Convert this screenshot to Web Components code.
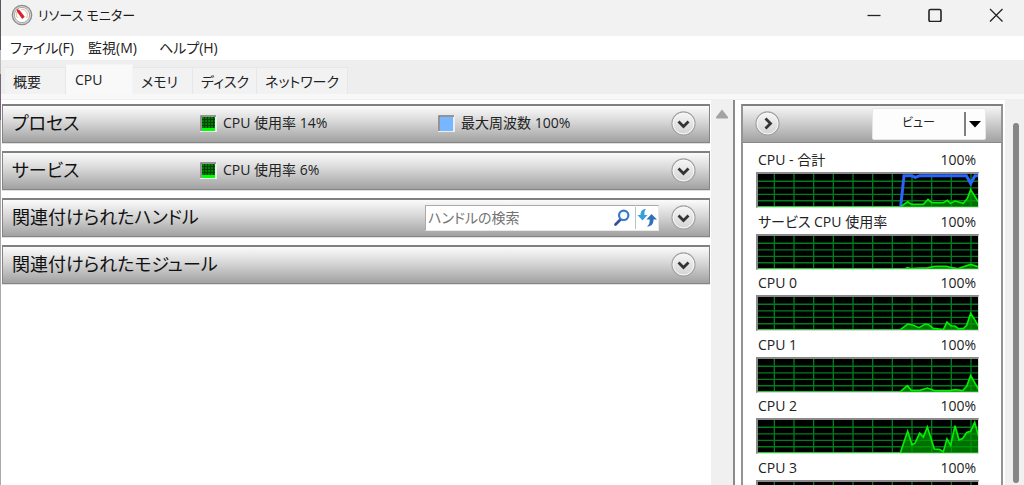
<!DOCTYPE html>
<html lang="ja">
<head>
<meta charset="utf-8">
<title>リソース モニター</title>
<style>
html, body { margin: 0; height: 100%; }
body { background: #fff; color: #1a1a1a; font: 14px/20px "Open Sans", "Noto Sans CJK JP", sans-serif; font-feature-settings: "palt"; overflow: hidden; }
</style>
</head>
<body>
<rm-window>
  <rm-titlebar slot="title">リソース モニター</rm-titlebar>
  <rm-menubar slot="menu">
    <rm-menu>ファイル(F)</rm-menu>
    <rm-menu>監視(M)</rm-menu>
    <rm-menu>ヘルプ(H)</rm-menu>
  </rm-menubar>
  <rm-tabs slot="tabs">
    <rm-tab style="--w:61px">概要</rm-tab>
    <rm-tab style="--w:67px" selected>CPU</rm-tab>
    <rm-tab style="--w:60px">メモリ</rm-tab>
    <rm-tab style="--w:64px">ディスク</rm-tab>
    <rm-tab style="--w:91px">ネットワーク</rm-tab>
  </rm-tabs>
  <rm-section slot="main" heading="プロセス">
    <rm-legend slot="first" kind="usage">CPU 使用率 14%</rm-legend>
    <rm-legend slot="second" kind="freq">最大周波数 100%</rm-legend>
  </rm-section>
  <rm-section slot="main" heading="サービス">
    <rm-legend slot="first" kind="usage">CPU 使用率 6%</rm-legend>
  </rm-section>
  <rm-section slot="main" heading="関連付けられたハンドル">
    <rm-search slot="tool"></rm-search>
  </rm-section>
  <rm-section slot="main" heading="関連付けられたモジュール"></rm-section>
  <rm-graphs slot="side">
    <rm-graph label="CPU - 合計" points="428,99 449,84 461,92 496,92 510,77 521,87 556,87 568,80 577,89 591,82 616,89 628,74 638,47 661,84" freq="428,99 438,5 461,5 472,10 485,5 625,5 638,29 651,5 661,5"></rm-graph>
    <rm-graph label="サービス CPU 使用率" points="441,99 449,96 459,99 486,97 506,97 531,92 566,92 581,96 599,99 616,93 638,86 661,93"></rm-graph>
    <rm-graph label="CPU 0" points="427,99 449,82 464,85 483,93 502,82 512,84 526,95 556,99 567,76 580,88 591,88 601,96 616,96 626,86 638,50 651,70 662,90"></rm-graph>
    <rm-graph label="CPU 1" points="427,99 448,81 460,95 486,95 508,88 531,96 576,96 591,93 614,96 626,83 638,50 662,93"></rm-graph>
    <rm-graph label="CPU 2" points="427,99 449,34 462,75 471,70 485,40 496,52 508,21 529,88 544,89 556,96 567,57 578,77 591,17 603,60 614,56 626,38 638,34 650,7 662,50"></rm-graph>
    <rm-graph label="CPU 3" points="427,99 449,80 470,94 560,96 638,50 661,90"></rm-graph>
  </rm-graphs>
</rm-window>
<script>
const define = (name, render) => customElements.define(name, class extends HTMLElement {
  connectedCallback() {
    if (this.shadowRoot) return;
    this.attachShadow({ mode: 'open' }).innerHTML = render(this);
  }
});

define('rm-window', () => `
<style>
  :host { display: grid; grid-template-columns: 1px minmax(0, 1fr); height: 100vh; }
  .edge { background: linear-gradient(#5d5662 50px, #bbb 50px 74px, #74647c 74px 120px, #aaa 120px); }
  .window { display: flex; flex-direction: column; min-height: 0; }
  .strip { height: 5px; background: #f8f8f8; border-bottom: 1px solid #efefef; flex: none; }
  .body { flex: 1; min-height: 0; display: grid; grid-template-columns: minmax(0, 1fr) 22px 8px 264px 19px; }
  main { display: flex; flex-direction: column; gap: 8px; padding: 4px 1px 0 1px; }
  .scroll { background: #f0f0f0; display: flex; justify-content: center; padding-top: 9px; }
  .scroll svg { width: 14px; height: 10px; }
  .split { border-left: 2px solid #8b8b8b; background: #fff; }
  aside { min-height: 0; overflow: hidden; padding: 4px 2px 0 0; }
  .outer { background: #f0f0f0; padding: 23px 0 2px 8px; box-sizing: border-box; min-height: 0; }
  .thumb { width: 6px; height: 100%; border-radius: 3px; background: #868686; }
</style>
<div class="edge"></div>
<div class="window">
  <slot name="title"></slot><slot name="menu"></slot><slot name="tabs"></slot>
  <div class="strip"></div>
  <div class="body">
    <main><slot name="main"></slot></main>
    <div class="scroll"><svg viewBox="0 0 14 10"><path d="M7 .5 13 8q.5 1.500-1 1.500H2Q.5 9.500 1 8Z" fill="#a3a3a3"/></svg></div>
    <div class="split"></div>
    <aside><slot name="side"></slot></aside>
    <div class="outer"><div class="thumb"></div></div>
  </div>
</div>`);

define('rm-titlebar', () => `
<style>
  :host { display: flex; align-items: center; height: 36px; background: #f2f2f2; flex: none; }
  h1 { font-size: 13px; line-height: 20px; font-weight: 400; margin: 0; flex: 1; padding-bottom: 6px; }
  .logo { width: 22px; height: 22px; margin: 0 5px 6px 10px; }
  button { width: 61px; height: 30px; padding: 0; margin-bottom: 6px; border: 0; background: none; display: grid; place-items: center; }
  button svg { width: 14px; height: 14px; fill: none; stroke: #222; stroke-width: 1.3; }
  .ctl { display: flex; margin-right: -2px; }
</style>
<svg class="logo" viewBox="0 0 22 22"><circle cx="11" cy="11" r="9.700" fill="#d8d8d8" stroke="#8d8d8d" stroke-width="1.300"/><circle cx="11" cy="11" r="7.600" fill="#fff" stroke="#a8a8a8"/><path d="M6.500 14A5.500 5.500 0 0 1 7 7M10 5.500A5.500 5.500 0 0 1 15.500 14" fill="none" stroke="#e6c9a4" stroke-width="1.200"/><path d="m5.500 4.800 3.200 1.400 5 6.500-2.500 2.200-5-7Z" fill="#d9232e"/></svg>
<h1><slot></slot></h1>
<div class="ctl">
  <button aria-label="最小化"><svg viewBox="0 0 14 14"><path d="M.5 7.500h13"/></svg></button>
  <button aria-label="最大化"><svg viewBox="0 0 14 14"><rect x="1" y="1.500" width="12" height="12" rx="1.500" stroke-width="1.600"/></svg></button>
  <button aria-label="閉じる"><svg viewBox="0 0 14 14"><path d="m1 1 12.500 12.500M13.500 1 1 13.500"/></svg></button>
</div>`);

define('rm-menubar', () => `
<style>:host { display: grid; grid-template-columns: 78px 71px auto; justify-content: start; height: 24px; padding-left: 9px; background: #fff; flex: none; }</style>
<slot></slot>`);

define('rm-menu', () => `
<style>
  :host { display: block; }
  button { font: inherit; line-height: 24px; color: #222; padding: 0; border: 0; background: none; font-feature-settings: inherit; white-space: nowrap; }
</style>
<button><slot></slot></button>`);

define('rm-tabs', () => `
<style>:host { display: flex; align-items: flex-end; height: 34px; padding-left: 4px; background: #eee; flex: none; }</style>
<slot></slot>`);

define('rm-tab', el => `
<style>
  :host { display: block; width: var(--w); }
  button { display: block; width: 100%; height: 27px; box-sizing: border-box; font: inherit; line-height: 24px; color: #222; text-align: left; white-space: nowrap; padding: 2px 0 0 8px; border: 1px solid #e7e7e7; border-left: 0; border-bottom: 0; background: #f2f2f2; font-feature-settings: inherit; }
  :host([selected]) button { height: 30px; padding: 0 0 0 9px; background: #f9f9f9; border-color: #f4f4f4; }
</style>
<button role="tab" aria-selected="${el.hasAttribute('selected')}"><slot></slot></button>`);

define('rm-round', el => `
<style>
  :host { display: block; flex: none; }
  button { display: block; width: 25px; height: 25px; padding: 0; border: 0; background: none; }
  svg { display: block; width: 25px; height: 25px; }
</style>
<button aria-label="${el.getAttribute('label')}"><svg viewBox="0 0 25 25">
<defs><linearGradient id="g" x2="0" y2="1"><stop stop-color="#f7f7f7"/><stop offset="1" stop-color="#d2d2d2"/></linearGradient></defs>
<circle cx="12.500" cy="12.500" r="11.500" fill="url(#g)" stroke="#a2a2a2" stroke-width="1.300"/><circle cx="12.500" cy="12.500" r="10.400" fill="none" stroke="#f8f8f8"/>
<path d="${el.getAttribute('dir') === 'right' ? 'm10.500 7.500 5 5-5 5' : 'm7.500 10.500 5 5 5-5'}" fill="none" stroke="#333" stroke-width="2.800"/></svg></button>`);

define('rm-section', el => `
<style>
  :host { display: grid; grid-template-columns: 197px 238px minmax(0, 1fr) auto; align-items: center; height: 39px; box-sizing: border-box; padding: 0 13px 2px 0; border: 1px solid #858585; border-top: 2px solid #808080; background: linear-gradient(#fbfbfb, #d6d6d6 45%, #a1a1a1); box-shadow: 0 1px #e0e0e0; }
  h2 { grid-column: 1 / 3; grid-row: 1; margin: 0; padding-left: 9px; font-size: 18px; line-height: 28px; font-weight: 400; color: #111; white-space: nowrap; }
  .first { grid-column: 2; grid-row: 1; }
  .second { grid-column: 3; grid-row: 1; }
  .tool { grid-column: 2 / 4; grid-row: 1; justify-self: end; padding-top: 2px; }
  rm-round { grid-column: 4; grid-row: 1; margin-left: 12px; }
</style>
<h2>${el.getAttribute('heading')}</h2>
<div class="first"><slot name="first"></slot></div>
<div class="second"><slot name="second"></slot></div>
<div class="tool"><slot name="tool"></slot></div>
<rm-round label="展開"></rm-round>`);

define('rm-legend', el => `
<style>
  :host { display: flex; align-items: center; gap: 6px; line-height: 20px; color: #222; white-space: nowrap; }
  svg { width: 17px; height: 17px; }
</style>
<svg viewBox="0 0 17 17"><path d="M0 0h17v17H0z" fill="#eee"/><path d="M1 16V1h15" fill="none" stroke="#777" stroke-width="1.500"/>${el.getAttribute('kind') === 'usage'
  ? '<path d="M2 2h13v12H2z" fill="#008000"/><path d="M4.500 2v12M7.500 2v12M10.500 2v12M13.500 2v12M2 4.500h13M2 7.500h13M2 10.500h13" stroke="#004000"/><path d="M2 13h13v3H2z" fill="#00ff00"/>'
  : '<path d="M2 2h13v14H2z" fill="#77b7ff"/>'}</svg><span><slot></slot></span>`);

define('rm-search', () => `
<style>
  :host { display: flex; width: 234px; height: 26px; box-sizing: border-box; border: 1px solid #e8e8e8; border-top-color: #aaa; border-left-color: #aaa; background: #fff; }
  input { flex: 1; min-width: 0; border: 0; outline: 0; padding: 0 0 0 2px; background: none; font: inherit; font-feature-settings: inherit; }
  input::placeholder { color: #737373; opacity: 1; }
  button { width: 23px; padding: 0; border: 0; background: none; display: grid; place-items: center; }
  button + button { border-left: 1px solid #b8c4ca; margin: 1px 0; }
  svg { width: 20px; height: 20px; }
  .find { margin-right: 2px; }
</style>
<input type="text" aria-label="ハンドルの検索" placeholder="ハンドルの検索">
<button class="find" aria-label="検索"><svg viewBox="0 0 20 20" fill="none"><path d="m9 11-5.500 5.500" stroke="#34509b" stroke-width="2.800" stroke-linecap="round"/><circle cx="11.700" cy="7.300" r="4.700" fill="#f4fbff" stroke="#3978c7" stroke-width="2.200"/></svg></button>
<button aria-label="更新"><svg viewBox="0 0 20 20"><path d="M9 1C5.500 1 3.500 3 3.500 7H.5l5 5.500L10.500 7H7.500c0-3 0-4.300 1.500-6Z" fill="#38a0d8"/><path d="M10 18.500c4 0 6.500-2 6.500-7H20L14.500 6 9.500 11.500h3.200c0 3-.2 5-2.700 7Z" fill="#3271b9"/></svg></button>`);

define('rm-graphs', () => `
<style>
  :host { display: block; border: 2px solid #949494; border-top-color: #808080; border-bottom: 0; box-sizing: border-box; height: 100%; overflow: hidden; background: #fff; }
  header { display: flex; align-items: center; justify-content: space-between; height: 36px; box-sizing: content-box; padding: 0 15px 0 12px; border-bottom: 1px solid #888; background: linear-gradient(#f6f6f6, #d0d0d0 45%, #a1a1a1); }
  rm-round { padding-bottom: 2px; }
  .view { display: flex; align-items: center; width: 114px; height: 32px; border: 1px solid #e6e6e6; border-radius: 2px; box-sizing: border-box; background: #fdfdfd; }
  button { border: 0; padding: 0; background: none; color: #222; font: inherit; font-feature-settings: inherit; }
  .name { flex: 1; height: 30px; padding-bottom: 2px; font-size: 12px; }
  .drop { width: 21px; height: 24px; border-left: 2px solid #808080; }
  svg { width: 14px; height: 8px; display: block; margin-left: 2px; }
  .list { display: grid; grid-auto-rows: 1fr; height: 369px; padding: 5px 22px 0 13px; }
</style>
<header><rm-round dir="right" label="折りたたむ"></rm-round>
<div class="view"><button class="name">ビュー</button><button class="drop" aria-label="ビューの選択"><svg viewBox="0 0 14 8"><path d="M1 1h12L7 7.500Z" fill="#000"/></svg></button></div></header>
<div class="list"><slot></slot></div>`);

define('rm-graph', el => {
  const lines = [...Array(11)].map((_, i) => `M${49 + i * 59} 0V100`).join('') + [22, 42, 62, 81].map(y => `M0 ${y}H660`).join('');
  const pts = el.getAttribute('points');
  const freq = el.getAttribute('freq');
  return `
<style>
  :host { display: flex; flex-direction: column; }
  .cap { display: flex; justify-content: space-between; line-height: 24px; color: #222; padding: 0 3px 0 2px; white-space: nowrap; }
  svg { display: block; box-sizing: border-box; width: 100%; height: 36px; border: 2px solid #8a8a8a; border-right: 1px solid #ddd; border-bottom: 1px solid #ddd; background: #000; }
</style>
<div class="cap"><span>${el.getAttribute('label')}</span><span>100%</span></div>
<svg viewBox="0 0 660 100" preserveAspectRatio="none" role="img" aria-label="${el.getAttribute('label')}">
<path d="${lines}" stroke="#007d1c" stroke-width="4"/>
<path d="M0 98.500H660" stroke="#20d030" stroke-width="3"/>
${freq ? `<polyline points="${freq}" fill="none" stroke="#2b63ff" stroke-width="9"/>` : ''}
<polygon points="${pts} 661,100 428,100" fill="#00a000" fill-opacity=".7"/>
<polyline points="${pts}" fill="none" stroke="#00f000" stroke-width="5"/></svg>`;
});
</script>
</body>
</html>
